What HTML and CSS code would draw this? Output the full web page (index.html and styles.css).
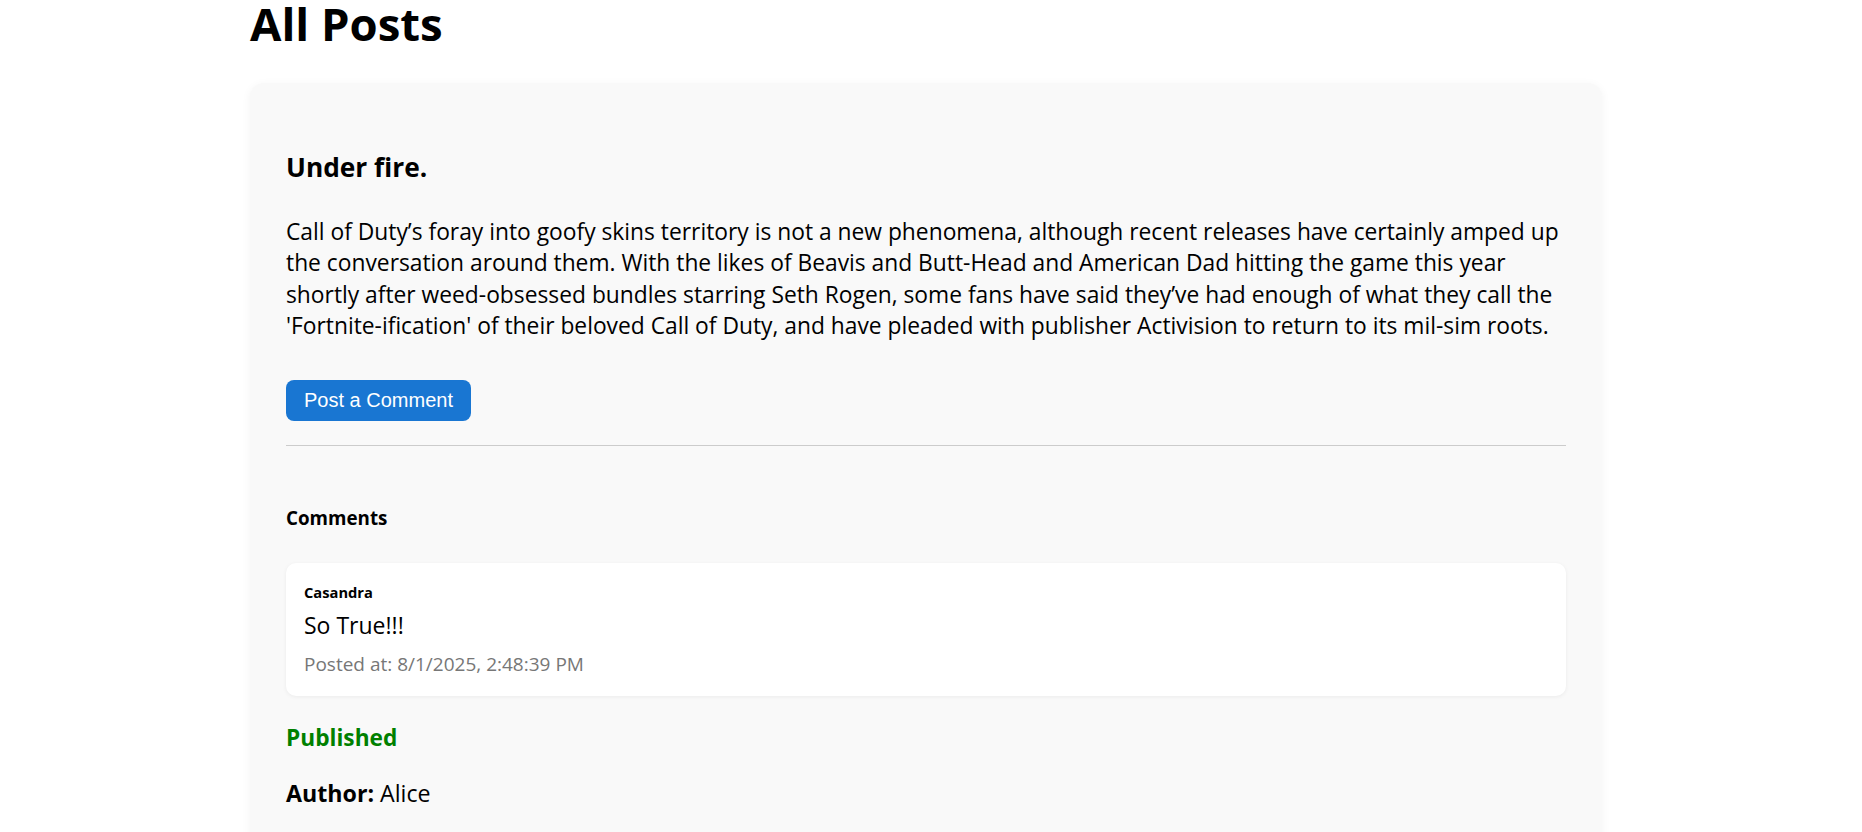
FILE: index.html
```html
<!DOCTYPE html>
<html lang="en">
<head>
<meta charset="utf-8">
<title>All Posts</title>
<link rel="stylesheet" href="styles.css">
</head>
<body>
<main class="page">
  <h1 class="page-title">All Posts</h1>
  <article class="post-card">
    <h2 class="post-title">Under fire.</h2>
    <p class="post-body">Call of Duty’s foray into goofy skins territory is not a new phenomena, although recent releases have certainly amped up the conversation around them. With the likes of Beavis and Butt-Head and American Dad hitting the game this year shortly after weed-obsessed bundles starring Seth Rogen, some fans have said they’ve had enough of what they call the 'Fortnite-ification' of their beloved Call of Duty, and have pleaded with publisher Activision to return to its mil-sim roots.</p>
    <button class="btn-comment" type="button">Post a Comment</button>
    <hr class="divider">
    <section class="comments">
      <h3 class="comments-title">Comments</h3>
      <div class="comment">
        <div class="comment-author">Casandra</div>
        <div class="comment-text">So True!!!</div>
        <div class="comment-date">Posted at: 8/1/2025, 2:48:39 PM</div>
      </div>
    </section>
    <div class="status">Published</div>
    <div class="author"><strong>Author:</strong> Alice</div>
  </article>
</main>
</body>
</html>
```

FILE: styles.css
```css
html, body {
  margin: 0;
  padding: 0;
  background: #ffffff;
}

body {
  font-family: "Open Sans", "Noto Sans", sans-serif;
  color: #000;
}

.page {
  width: 1352px;
  margin-left: 250px;
}

.page-title {
  margin: 0 0 37px;
  font-size: 45.5px;
  line-height: 46px;
  font-weight: 700;
}

.post-card {
  background: #f9f9f9;
  border-radius: 14px;
  box-shadow: 0 2px 10px rgba(0, 0, 0, 0.05);
  padding: 36px 36px 40px;
}

.post-title {
  margin: 31px 0 32px;
  font-size: 26.3px;
  line-height: 34px;
  font-weight: 700;
}

.post-body {
  margin: 0 0 38px;
  font-size: 22.8px;
  line-height: 31.4px;
}

.btn-comment {
  display: block;
  font-family: "Liberation Sans", Arial, sans-serif;
  font-size: 20px;
  line-height: 23px;
  padding: 9px 18px;
  border: none;
  border-radius: 8px;
  background: #1976d2;
  color: #fff;
  cursor: pointer;
}

.divider {
  margin: 24px 0 0;
  border: none;
  border-top: 1px solid #cccccc;
  height: 0;
}

.comments-title {
  margin: 60px 0 33px;
  font-size: 18.8px;
  line-height: 24px;
  font-weight: 700;
}

.comment {
  background: #ffffff;
  border-radius: 10px;
  box-shadow: 0 1px 4px rgba(0, 0, 0, 0.06);
  padding: 19px 18px 20px;
}

.comment-author {
  font-size: 14.7px;
  line-height: 20px;
  font-weight: 700;
}

.comment-text {
  margin-top: 9px;
  font-size: 23px;
  line-height: 28px;
}

.comment-date {
  margin-top: 13px;
  font-size: 19px;
  line-height: 24px;
  color: #777777;
}

.status {
  margin-top: 27px;
  font-size: 22.7px;
  line-height: 30px;
  font-weight: 700;
  color: #008000;
}

.author {
  margin-top: 25px;
  font-size: 23.2px;
  line-height: 30px;
}

.author strong {
  font-weight: 700;
}
```
